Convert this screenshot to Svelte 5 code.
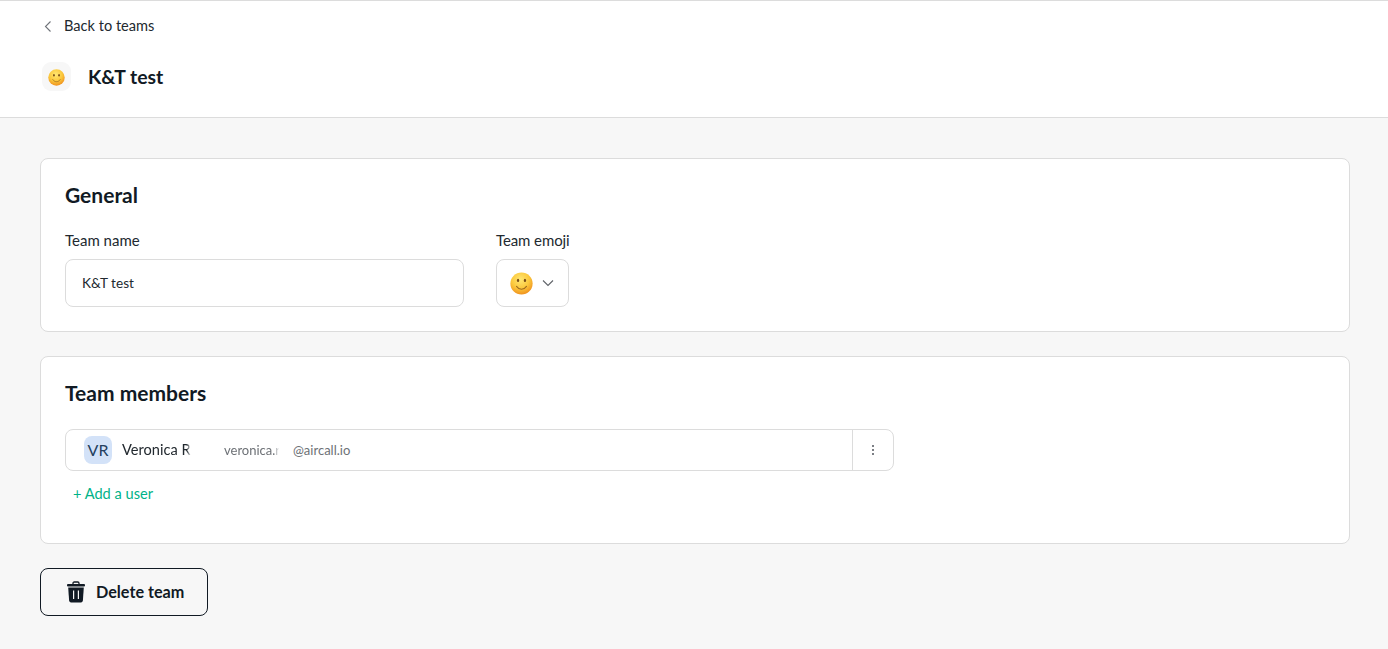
<script lang="ts">
  const team = 'K&T test'
</script>

{#snippet smiley(size: number, id: string)}
  <svg class="emoji" width={size} height={size} viewBox="0 0 24 24" aria-hidden="true">
    <defs>
      <radialGradient id={id} cx="0.45" cy="0.32" r="0.72">
        <stop offset="0" stop-color="#ffe774" />
        <stop offset="0.55" stop-color="#fbc83c" />
        <stop offset="1" stop-color="#ee8a1a" />
      </radialGradient>
    </defs>
    <circle cx="12" cy="12" r="11.6" fill="url(#{id})" />
    <ellipse cx="8.4" cy="8.8" rx="1.2" ry="1.7" fill="#7a4e18" />
    <ellipse cx="15.6" cy="8.8" rx="1.2" ry="1.7" fill="#7a4e18" />
    <path d="M6.8 15c1.4 2 3.2 2.9 5.2 2.9s3.8-.9 5.2-2.9" fill="none" stroke="#9c6a20" stroke-width="1.1" stroke-linecap="round" />
  </svg>
{/snippet}

<div class="page">
  <header class="top">
    <a class="back" href="#teams">
      <svg width="16" height="16" viewBox="0 0 16 16" aria-hidden="true">
        <path d="M10.5 3.5 5.5 8.5l5 5" fill="none" stroke="#6f7379" stroke-width="1.1" />
      </svg>
      <span>Back to teams</span>
    </a>
    <div class="title">
      <span class="title-icon">{@render smiley(17, 'sm-title')}</span>
      <h1>{team}</h1>
    </div>
  </header>

  <main class="content">
    <section class="card general">
      <h2>General</h2>
      <div class="fields">
        <div class="field">
          <span class="label">Team name</span>
          <div class="input name-input">{team}</div>
        </div>
        <div class="field">
          <span class="label narrow">Team emoji</span>
          <div class="input emoji-input">
            {@render smiley(23, 'sm-select')}
            <svg width="12" height="8" viewBox="0 0 12 8" aria-hidden="true">
              <path d="M1 1.5 6 6.5l5-5" fill="none" stroke="#5f6368" stroke-width="1.1" />
            </svg>
          </div>
        </div>
      </div>
    </section>

    <section class="card members">
      <h2>Team members</h2>
      <div class="member">
        <span class="avatar"><span class="lift">VR</span></span>
        <span class="member-name"><span class="lift">Veronica Ri</span></span>
        <span class="member-mail"><span class="mail-user">veronica.ri</span><span>@aircall.io</span></span>
        <button class="more" aria-label="More">
          <svg width="4" height="12" viewBox="0 0 4 12" aria-hidden="true">
            <circle cx="2" cy="2" r="1" fill="#50555c" />
            <circle cx="2" cy="6" r="1" fill="#50555c" />
            <circle cx="2" cy="10" r="1" fill="#50555c" />
          </svg>
        </button>
      </div>
      <a class="add" href="#add">+ Add a user</a>
    </section>

    <button class="delete">
      <svg width="20" height="22" viewBox="0 0 20 22" aria-hidden="true">
        <path d="M7 3V2.2C7 1.5 7.5 1 8.2 1h3.6c.7 0 1.2.5 1.2 1.2V3" fill="none" stroke="#111a24" stroke-width="1.3" />
        <rect x="1" y="3" width="18" height="2.4" rx="1" fill="#111a24" />
        <path d="M2.2 6.4h15.6l-.9 13.2c-.1 1-.9 1.8-1.9 1.8H5c-1 0-1.8-.8-1.9-1.8Z" fill="#111a24" />
        <path d="M7.6 9.5v8.5M12.4 9.5v8.5" stroke="#f7f7f7" stroke-width="1.2" />
      </svg>
      <span class="lift">Delete team</span>
    </button>
  </main>
</div>

<style>
  :global(body) {
    background: #f7f7f7;
    font-family: Lato, "Open Sans", sans-serif;
    color: #111a24;
  }
  .page {
    min-height: 649px;
    background: #f7f7f7;
  }
  .top {
    height: 116px;
    box-sizing: content-box;
    background: #fff;
    border-top: 1px solid #dcdcdc;
    border-bottom: 1px solid #dcdcdc;
    padding-left: 40px;
  }
  .back {
    display: flex;
    align-items: center;
    gap: 8px;
    height: 50px;
    color: #22292f;
    font-size: 14.6px;
    text-decoration: none;
  }
  .back span { margin-bottom: 1px; }
  .title {
    display: flex;
    align-items: center;
    gap: 17px;
    margin-top: 11px;
    margin-left: 2px;
  }
  .title-icon {
    display: flex;
    align-items: center;
    justify-content: center;
    width: 29px;
    height: 29px;
    border-radius: 9px;
    background: #f7f7f7;
    padding: 1px 1px 0 0;
    box-sizing: border-box;
  }
  h1 {
    margin: 0;
    font-size: 19.4px;
    font-weight: 700;
  }
  h2 {
    margin: 0;
    font-size: 21px;
    line-height: 24px;
    font-weight: 700;
  }
  .lift {
    position: relative;
    top: -1px;
  }
  .content {
    display: flex;
    flex-direction: column;
    align-items: flex-start;
    gap: 24px;
    padding: 40px 38px 0 40px;
  }
  .card {
    box-sizing: border-box;
    width: 100%;
    background: #fff;
    border: 1px solid #dcdcdc;
    border-radius: 8px;
    padding: 24px;
  }
  .general { height: 174px; }
  .members { height: 188px; }
  .fields {
    display: flex;
    gap: 32px;
    margin-top: 25px;
  }
  .field {
    display: flex;
    flex-direction: column;
    gap: 11px;
  }
  .label {
    font-size: 15px;
    line-height: 16px;
    color: #22292f;
  }
  .label.narrow { letter-spacing: -0.1px; }
  .input {
    box-sizing: border-box;
    display: flex;
    align-items: center;
    height: 48px;
    border: 1px solid #dcdcdc;
    border-radius: 8px;
    background: #fff;
    font-size: 13.6px;
    color: #22292f;
  }
  .name-input {
    width: 399px;
    padding-left: 16px;
  }
  .emoji-input {
    width: 73px;
    padding-left: 13px;
    gap: 9px;
  }
  .member {
    box-sizing: border-box;
    display: flex;
    align-items: center;
    width: 829px;
    height: 42px;
    margin-top: 24px;
    border: 1px solid #dcdcdc;
    border-radius: 8px;
    padding-left: 18px;
  }
  .avatar {
    display: flex;
    align-items: center;
    justify-content: center;
    width: 28px;
    height: 28px;
    border-radius: 8px;
    background: #d3e2f8;
    color: #24405f;
    font-size: 16px;
  }
  .member-name {
    box-sizing: border-box;
    width: 69px;
    margin-left: 10px;
    font-size: 14.6px;
    color: #22292f;
    white-space: nowrap;
    overflow: hidden;
    -webkit-mask-image: linear-gradient(to right, #000 94%, transparent);
    mask-image: linear-gradient(to right, #000 94%, transparent);
  }
  .member-mail {
    display: flex;
    flex: 1;
    margin-left: 33px;
    font-size: 13px;
    line-height: 16px;
    color: #6d7176;
    white-space: nowrap;
  }
  .mail-user {
    display: block;
    width: 69px;
    overflow: hidden;
    -webkit-mask-image: linear-gradient(to right, #000 72%, transparent 80%);
    mask-image: linear-gradient(to right, #000 72%, transparent 80%);
  }
  .more {
    display: flex;
    align-items: center;
    justify-content: center;
    width: 41px;
    height: 100%;
    padding: 0;
    border: 0;
    border-left: 1px solid #dcdcdc;
    background: none;
  }
  .add {
    display: block;
    margin: 15px 0 0 8px;
    font-size: 14.6px;
    line-height: 16px;
    color: #00b388;
    text-decoration: none;
  }
  .delete {
    box-sizing: border-box;
    display: flex;
    align-items: center;
    gap: 10px;
    width: 168px;
    height: 48px;
    padding: 0 0 0 25px;
    border: 1px solid #111a24;
    border-radius: 8px;
    background: transparent;
    font: inherit;
    font-size: 16.2px;
    font-weight: 700;
    color: #111a24;
  }
  .emoji { flex: none; }
</style>
